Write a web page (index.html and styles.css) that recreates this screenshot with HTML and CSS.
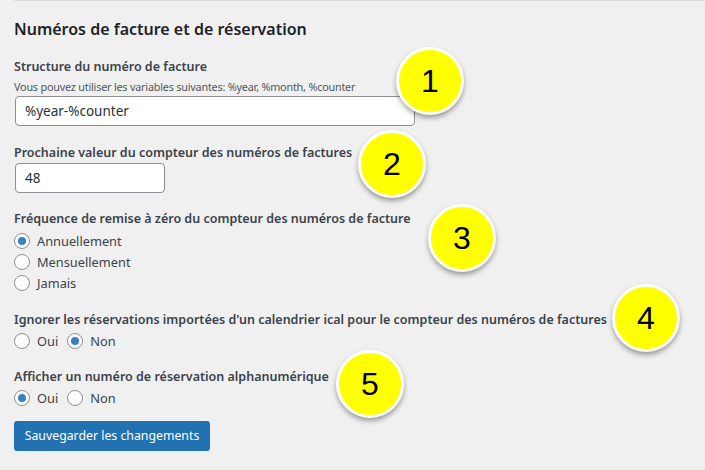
FILE: index.html
```html
<!DOCTYPE html>
<html lang="fr">
<head>
<meta charset="utf-8">
<link rel="stylesheet" href="styles.css">
</head>
<body>
<div class="page">
  <div class="topline"></div>
  <h2 class="title">Numéros de facture et de réservation</h2>

  <div class="field f1">
    <div class="label">Structure du numéro de facture</div>
    <div class="help">Vous pouvez utiliser les variables suivantes: %year, %month, %counter</div>
    <div class="input wide">%year-%counter</div>
  </div>

  <div class="field f2">
    <div class="label">Prochaine valeur du compteur des numéros de factures</div>
    <div class="input narrow">48</div>
  </div>

  <div class="field f3">
    <div class="label">Fréquence de remise à zéro du compteur des numéros de facture</div>
    <div class="radios column">
      <div class="opt"><span class="radio on"></span><span>Annuellement</span></div>
      <div class="opt"><span class="radio"></span><span>Mensuellement</span></div>
      <div class="opt"><span class="radio"></span><span>Jamais</span></div>
    </div>
  </div>

  <div class="field f4">
    <div class="label">Ignorer les réservations importées d'un calendrier ical pour le compteur des numéros de factures</div>
    <div class="radios row">
      <div class="opt"><span class="radio"></span><span>Oui</span></div>
      <div class="opt"><span class="radio on"></span><span>Non</span></div>
    </div>
  </div>

  <div class="field f5">
    <div class="label">Afficher un numéro de réservation alphanumérique</div>
    <div class="radios row">
      <div class="opt"><span class="radio on"></span><span>Oui</span></div>
      <div class="opt"><span class="radio"></span><span>Non</span></div>
    </div>
  </div>

  <div class="btn">Sauvegarder les changements</div>

  <div class="badge b1">1</div>
  <div class="badge b2">2</div>
  <div class="badge b3">3</div>
  <div class="badge b4">4</div>
  <div class="badge b5">5</div>
</div>
</body>
</html>
```

FILE: styles.css
```css
html, body {
  margin: 0;
  padding: 0;
  background: #f0f0f1;
}
.page {
  position: relative;
  width: 705px;
  height: 470px;
  overflow: hidden;
  padding: 0 0 0 14px;
  box-sizing: border-box;
  font-family: "Noto Sans", "Open Sans", sans-serif;
  color: #3c434a;
}
.topline {
  height: 0;
  border-top: 1px solid #dcdcde;
}
.title {
  margin: 17px 0 0 0;
  font-size: 16px;
  line-height: 22px;
  font-weight: 600;
  color: #1d2327;
}
.field { display: flex; flex-direction: column; }
.f1 { margin-top: 18px; }
.f2 { margin-top: 18px; }
.f3 { margin-top: 17px; }
.f4 { margin-top: 18px; }
.f5 { margin-top: 17px; }
.label {
  font-size: 12.5px;
  line-height: 18px;
  font-weight: 600;
  color: #3c434a;
}
.help {
  font-size: 10.8px;
  line-height: 14px;
  margin-top: 4px;
  color: #50575e;
  letter-spacing: -0.2px;
}
.input {
  margin-top: 2px;
  height: 30px;
  box-sizing: border-box;
  border: 1px solid #8c8f94;
  border-radius: 4px;
  background: #fff;
  font-size: 13.5px;
  line-height: 28px;
  padding: 0 9px;
  color: #2c3338;
  margin-left: 1px;
}
.f2 .input { margin-top: 1px; }
.wide { width: 400px; }
.narrow { width: 150px; }
.radios { display: flex; }
.radios.column { flex-direction: column; margin-top: 2px; }
.radios.row { flex-direction: row; gap: 9px; margin-top: 1px; }
.opt {
  display: flex;
  align-items: center;
  gap: 7px;
  height: 21px;
  font-size: 12.8px;
  color: #3c434a;
}
.radio {
  width: 16px;
  height: 16px;
  box-sizing: border-box;
  border: 1px solid #8c8f94;
  border-radius: 50%;
  background: #fff;
  display: inline-flex;
  align-items: center;
  justify-content: center;
  flex: none;
}
.radio.on::after {
  content: "";
  width: 8px;
  height: 8px;
  border-radius: 50%;
  background: #3582c4;
}
.btn {
  margin-top: 13px;
  width: 196px;
  height: 30px;
  box-sizing: border-box;
  background: #2271b1;
  border-radius: 3px;
  color: #fff;
  font-size: 12.3px;
  line-height: 30px;
  text-align: center;
}
.badge {
  position: absolute;
  width: 62px;
  height: 62px;
  border-radius: 50%;
  background: #ffff00;
  border: 3px solid #fff;
  box-shadow: 0 3px 5px rgba(0,0,0,0.35);
  display: flex;
  align-items: center;
  justify-content: center;
  font-family: "Liberation Sans", Arial, sans-serif;
  font-size: 32px;
  color: #000;
}
.b1 { left: 396px; top: 47px; }
.b2 { left: 358px; top: 130px; }
.b3 { left: 428px; top: 204px; }
.b4 { left: 612px; top: 284px; }
.b5 { left: 336px; top: 350px; }
```
